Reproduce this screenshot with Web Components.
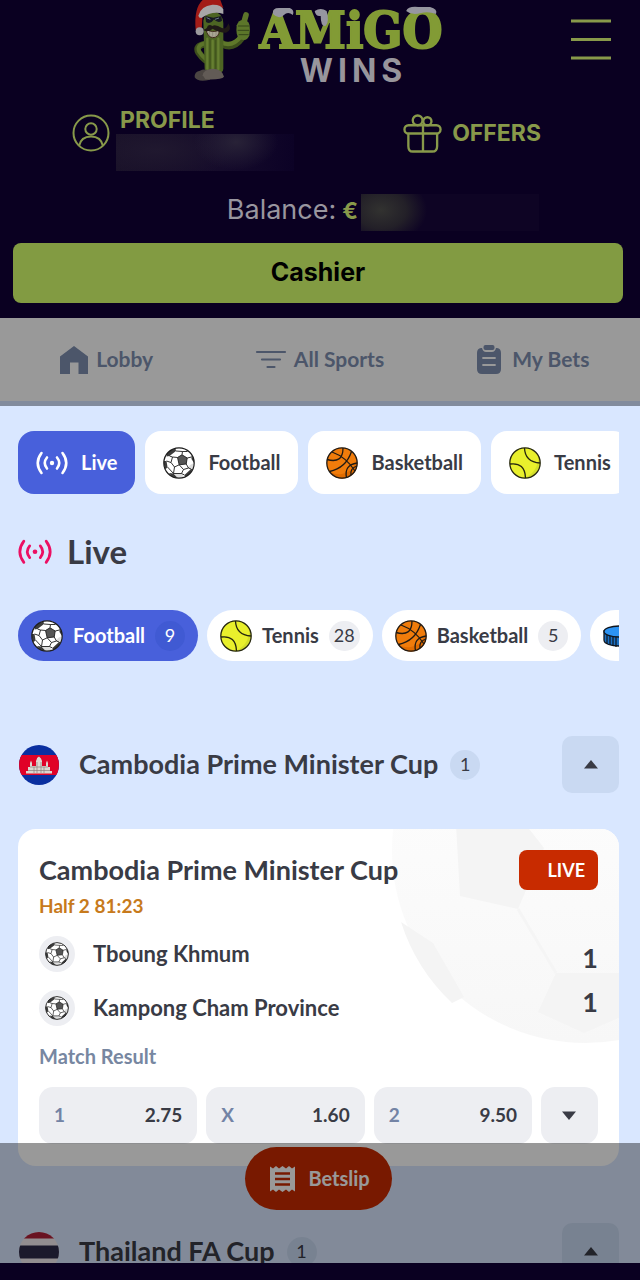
<!DOCTYPE html>
<html lang="en">
<head>
<meta charset="utf-8">
<meta name="viewport" content="width=device-width, initial-scale=1">
<title>Amigo Wins – Live</title>
<style>
  html, body { margin: 0; height: 100%; }
  body {
    font-family: Lato, "Open Sans", sans-serif;
    font-weight: 700;
    color: #393b45;
    background: #0a0021;
    --ink: #393b45;
    --blue: #4860db;
    --red: #c82b00;
    --page: #d9e7ff;
    --pebble: #edeef2;
    --lime: #88994a;
  }
</style>
</head>
<body>
<amigo-app></amigo-app>

<script>
const ICONS = {
  football: ['0 0 32 32', `
    <circle cx="16" cy="16" r="15.2" fill="#fff"/>
    <path d="M4 6.500 7 3.600 12.500 1.300 13 4 6.500 9 3.500 9.500z M.8 14 3.500 14 4.500 20 2.500 22.500 1 18z M6 26 10.500 26.500 15 31 9 29.500z M28.500 8 31 13 31 16 28.500 12z M28 22 30 21.500 27 26.500 22 30 21.500 28z" fill="#3c3c3c"/>
    <path d="M14.500 10.500 19 7.800 24.200 11 23.200 17 16.200 17.800z" fill="#555"/>
    <path d="M27 18 31 16 30 21.500 28 22 25 21z M11 26.500 19 27 21 31 15 31z" fill="#ddd"/>
    <g fill="none" stroke="#1c1c1c" stroke-width=".9" stroke-linejoin="round">
      <path d="M14.500 10.500 19 7.800 24.200 11 23.200 17 16.200 17.800z M14.500 10.500 9.500 10 6.500 9 M9.500 10 8 15.500 3.500 14 M8 15.500 11.500 20 16.200 17.800 M11.500 20 10.500 26.500 4.500 20 M10.500 26.500 18.500 26.500 20.500 22.500 16.200 17.800 M20.500 22.500 25.500 21 23.200 17 M18.500 26.500 21.500 28 M25.500 21 28 22 M24.200 11 28.500 10 M19 7.800 19.500 4.500 13 4 M19.500 4.500 24.500 4.500"/>
      <circle cx="16" cy="16" r="15.200" stroke-width="1.200"/>
    </g>`],
  basketball: ['0 0 32 32', `
    <circle cx="16" cy="16" r="15.2" fill="#f07c0b"/>
    <path d="M3 24A15.200 15.200 0 0 0 31 13Q27 25 16 27Q8 28 3 24z" fill="#e06c00"/>
    <g fill="none" stroke="#201a14" stroke-width="1.300">
      <path d="M6 5Q20 10 29 24 M1 12.500Q17 17 17 1 M3.500 24.500Q20 21 25.500 4.500 M31 16Q18 18 20.500 30.500 M31 19Q24 21 25 28"/>
      <circle cx="16" cy="16" r="15.200"/>
    </g>`],
  tennis: ['0 0 32 32', `
    <circle cx="16" cy="16" r="15.2" fill="#e9f02c"/>
    <path d="M29.500 11A15.200 15.200 0 0 1 15 31.200Q28 26 29.500 11z" fill="#d3de2a"/>
    <g fill="none" stroke="#25260f" stroke-width="1.300">
      <path d="M15.500 1Q16 15 31 16 M1 17Q16 15 16.500 31"/>
      <circle cx="16" cy="16" r="15.200"/>
    </g>`],
  puck: ['0 0 32 32', `
    <path d="M1 11V20C1 28 31 28 31 20V11z" fill="#1a70c4" stroke="#10151c" stroke-width="1.300"/>
    <path d="M4 14V24 M7 16V25 M10 17V26 M13 17V27 M17 17V27 M21 17V26" stroke="#10151c" stroke-width="1.200"/>
    <ellipse cx="16" cy="11.500" rx="15" ry="5.500" fill="#2c93f3" stroke="#10151c" stroke-width="1.300"/>`],
  live: ['0 0 32 24', `
    <circle cx="16" cy="12" r="2.200" fill="currentColor"/>
    <path d="M5.500 2Q-2 12 5.500 22 M11 6.500Q6.500 12 11 17.500 M21 6.500Q25.500 12 21 17.500 M26.500 2Q34 12 26.500 22" fill="none" stroke="currentColor" stroke-width="2.600" stroke-linecap="round"/>`],
  profile: ['0 0 38 38', `
    <g fill="none" stroke="currentColor" stroke-width="2"><circle cx="19" cy="19" r="17.500"/><circle cx="19" cy="15" r="5.700"/><path d="M7 32Q9 22.500 19 22.500T31 32"/></g>`],
  gift: ['0 0 40 40', `
    <g fill="none" stroke="currentColor" stroke-width="2.400"><rect x="1.500" y="11.500" width="37" height="8.500" rx="4.200"/><path d="M5.500 20V33Q5.500 38.500 10 38.500H30Q35 38.500 35 33V20 M20.500 11V38"/><circle cx="15" cy="6.500" r="5"/><circle cx="25" cy="7.500" r="4.200"/></g>`],
  menu: ['0 0 40 41', `<path d="M0 2H40 M0 20.500H40 M0 39H40" stroke="currentColor" stroke-width="3"/>`],
  home: ['0 0 28 28', `<path d="M14 0 28 10.500V28H18.500V16.500H10V28H0V10.500z" fill="currentColor"/>`],
  filter: ['0 0 30 20', `<path d="M1 2H29 M6 9.500H24 M11.500 17H18.500" stroke="currentColor" stroke-width="2.200" stroke-linecap="round"/>`],
  clipboard: ['0 0 24 30', `
    <path d="M4 3H5Q6 7 9 7H15Q18 7 19 3H20Q24 3.500 24 8V24Q24 29 19 29H5Q0 29 0 24V8Q0 3.500 4 3z" fill="currentColor"/><rect x="6.500" y="0" width="11" height="5" rx="2" fill="currentColor"/>
    <path d="M6 13H18 M6 20H18" stroke="#999" stroke-width="1.800" stroke-linecap="round"/>`],
  receipt: ['0 0 25 28', `
    <path d="M0 1.500 3 3.500 6 1 9 3.500 12.500 1 16 3.500 19 1 22 3.500 25 1.500V26.500L22 24.500 19 27 16 24.500 12.500 27 9 24.500 6 27 3 24.500 0 26.500z" fill="currentColor"/>
    <path d="M5 8.500H20 M5 14H20 M5 19.500H20" stroke="#c82b00" stroke-width="2.400"/>`],
  up: ['0 0 14 9', `<path d="M7 0 14 8.500H0z" fill="currentColor"/>`],
  down: ['0 0 14 9', `<path d="M0 .500H14L7 9z" fill="currentColor"/>`],
  cambodia: ['0 0 40 40', `
    <clipPath id="c"><circle cx="20" cy="20" r="20"/></clipPath>
    <g clip-path="url(#c)"><rect width="40" height="40" fill="#0a2fa0"/><rect y="10" width="40" height="20" fill="#e00127"/>
    <path d="M7 28.500V26H9V22H11V18L12 15.500 13 18V21H17V16L18 13.500V13L20 11.500 22 13.500 23 16V21H27V18L28 15.500 29 18V22H31V26H33V28.500z" fill="#dcd6d0"/>
    <path d="M9 25.500H31 M11 22H29 M15 22V28 M18 17V28 M22 17V28 M25 22V28" stroke="#8d7f7c" stroke-width=".7"/></g>`],
  thailand: ['0 0 40 40', `
    <clipPath id="t"><circle cx="20" cy="20" r="20"/></clipPath>
    <g clip-path="url(#t)"><rect width="40" height="40" fill="#f3ecf0"/><path d="M0 0H40V6.500H0z M0 33.500H40V40H0z" fill="#b01f38"/><rect y="13.500" width="40" height="13" fill="#2d2a4a"/></g>`],
  watermark: ['0 0 386 386', `
    <defs><linearGradient id="g" x1="0" x2="0" y1=".4" y2="1"><stop offset="0" stop-color="#fcfcfc"/><stop offset="1" stop-color="#f7f7f7"/></linearGradient></defs>
    <circle cx="193" cy="193" r="193" fill="url(#g)"/>
    <path d="M63 150 68 239 126 252 152 191 120 150z M9 265 41 286 72 340 60 346Q24 312 9 265z M164 316H280L240 355 192 376 146 355z" fill="#f4f4f4"/>
    <path d="M126 252 164 316" stroke="#f5f5f5" stroke-width="3"/>`],
  cactus: ['45 0 180 250', `
    <g stroke-linecap="round" fill="none">
      <path d="M84 132Q50 136 62 158 70 170 82 180" stroke="#3e501c" stroke-width="20"/>
      <path d="M84 130Q54 134 64 156 72 168 82 176" stroke="#5c742a" stroke-width="12"/>
      <path d="M130 130Q164 150 192 112" stroke="#3e501c" stroke-width="22"/>
      <path d="M130 127Q162 144 190 108" stroke="#5f782a" stroke-width="13"/>
      <path d="M204 45 198 66" stroke="#5c742a" stroke-width="17"/>
    </g>
    <path d="M76 62Q80 36 108 36 134 38 136 70V206Q136 222 108 220 82 222 80 206z" fill="#4d6423"/>
    <path d="M88 116V206 M104 122V212 M121 116V208" stroke="#667f31" stroke-width="7" stroke-linecap="round"/>
    <path d="M96 118V210 M113 120V210" stroke="#394a1a" stroke-width="2"/>
    <path d="M176 76Q184 54 206 62 220 68 214 106 208 126 186 118 172 110 176 76z" fill="#5c762a"/>
    <path d="M180 78H213 M179 91H214 M182 104H212" stroke="#34451a" stroke-width="3"/>
    <path d="M82 48 106 53 130 48 132 62Q120 72 108 58 98 74 84 66z" fill="#171923"/>
    <path d="M86 53 97 58 M111 58 123 54" stroke="#69758a" stroke-width="3"/>
    <path d="M84 88Q104 100 124 90 124 113 104 113 88 111 84 88z" fill="#aaa694" stroke="#40291b" stroke-width="3"/>
    <path d="M94 95V110 M104 96V112 M114 95V110" stroke="#625e50" stroke-width="1"/>
    <path d="M103 78Q112 72 132 84 145 90 151 70 164 90 144 98 122 98 104 86 88 100 73 88 86 90 89 78 95 72 103 78z" fill="#201917"/>
    <path d="M53 90Q47 24 74 0H127L136 24Q100 6 74 40L71 88z" fill="#a31c18"/>
    <path d="M61 47Q68 18 103 14 130 13 136 28V42Q104 31 70 54 62 54 61 47z" fill="#a8a6a8"/>
    <circle cx="65" cy="94" r="12" fill="#9b999d"/>
    <path d="M50 232Q49 214 66 212 82 204 96 216V239Q60 248 50 232z" fill="#4b4542"/>
    <path d="M74 226Q76 208 103 206 134 207 138 230 132 240 82 238z" fill="#625b56"/>`],
  snow: ['0 0 184 24', `
    <g fill="#9696a0"><path d="M14 11Q13 5 20 5H31Q36 7 34 12 29 8 25 12 20 17 14 11z M56 8Q62 4 68 8 71 19 67 23 62 24 62 13 57 14 56 8z M148 8Q150 3 160 4H172Q180 6 178 11 170 8 163 10 154 13 148 8z"/></g>`]
};

const define = (name, css, html) => {
  customElements.define(name, class extends HTMLElement {
    constructor() {
      super();
      const template = document.createElement('template');
      template.innerHTML = `<style>*{box-sizing:border-box}button{font:inherit;color:inherit;border:0;margin:0;padding:0;background:none;cursor:pointer}h1,h2,h3,p{margin:0;font-weight:inherit}.text{padding-bottom:2px}${css}</style>${typeof html === 'function' ? html(this) : html}`;
      this.attachShadow({ mode: 'open' }).append(template.content.cloneNode(true));
    }
  });
};

define('ui-icon', `:host{display:block;flex:none;line-height:0}svg{display:block;width:100%;height:auto;overflow:visible}`,
  el => { const [box, art] = ICONS[el.getAttribute('name')]; return `<svg viewBox="${box}" aria-hidden="true">${art}</svg>`; });

define('count-badge', `
  :host{display:flex;align-items:center;justify-content:center;flex:none;min-width:30px;height:30px;padding:0 5px 2px;box-sizing:border-box;border-radius:15px;background:var(--badge,#edeef2);font-size:18px;font-weight:400}
`, `<slot></slot>`);

define('brand-logo', `
  :host{display:flex;gap:6px;height:90px}
  ui-icon.cactus{width:60px}
  .word{position:relative;display:flex;flex-direction:column;align-items:center}
  .amigo{font:700 51px/60px "DejaVu Serif Condensed","DejaVu Serif",serif;font-stretch:condensed;color:#829b35;-webkit-text-stroke:2px #829b35;white-space:nowrap}
  .wins{font:700 32px/22px Inter,sans-serif;letter-spacing:5px;padding-left:5px;color:#98969c}
  ui-icon.snow{position:absolute;top:3px;left:0;right:0}
`, `<ui-icon class="cactus" name="cactus"></ui-icon>
  <div class="word"><span class="amigo">AMiGO</span><span class="wins">WINS</span><ui-icon class="snow" name="snow"></ui-icon></div>`);

define('site-header', `
  :host{display:block;padding:0 17px 15px 13px;background:#0a0021;color:var(--lime);font-family:Inter,sans-serif;font-weight:700;font-size:23px}
  .top{display:grid;grid-template-columns:1fr auto 1fr;margin-bottom:17px}
  .top brand-logo{grid-column:2}
  .menu{justify-self:end;align-self:start;width:40px;margin:19px 12px 0 0}
  .links{display:flex;justify-content:space-between;padding:0 82px 0 59px}
  a{display:flex;align-items:flex-start;color:inherit;text-decoration:none;line-height:27px}
  .profile{gap:6px}
  .profile ui-icon{width:38px;margin-top:7px}
  .profile span{padding-left:4px}
  .mask{display:block;width:178px;height:37px;background:radial-gradient(ellipse 42px 28px at 120px 8px,#282237,transparent),radial-gradient(ellipse 80px 30px at 40px 16px,#20182f,transparent),linear-gradient(90deg,#191128,#150b2b 60%,#0c0226)}
  .offers{align-items:center;gap:10px;height:52px}
  .offers ui-icon{width:39px}
  .balance{display:flex;align-items:center;height:37px;margin:23px 84px 12px 0;justify-content:flex-end;gap:6px}
  .balance .label{font-size:27px;font-weight:400;color:#99969f;padding-bottom:6px}
  .balance .sign{padding-bottom:3px}
  .balance .mask{background:radial-gradient(ellipse 46px 34px at 20px 16px,#323230,#232028 55%,transparent),#0e0424;margin-left:-3px}
  .cashier{display:block;width:100%;height:60px;border-radius:8px;background:#829b42;color:#000;font-size:25px;font-weight:700;padding-bottom:3px}
`, `<div class="top"><brand-logo></brand-logo><button class="menu" aria-label="Menu"><ui-icon name="menu"></ui-icon></button></div>
  <div class="links">
    <a class="profile" href="#profile"><ui-icon name="profile"></ui-icon><div><span>PROFILE</span><i class="mask"></i></div></a>
    <a class="offers" href="#offers"><ui-icon name="gift"></ui-icon><span>OFFERS</span></a>
  </div>
  <div class="balance"><span class="label">Balance:</span><span class="sign">€</span><i class="mask"></i></div>
  <button class="cashier">Cashier</button>`);

define('sports-nav', `
  :host{display:block;background:#999;border-bottom:5px solid #828b9c}
  nav{display:grid;grid-template-columns:repeat(3,1fr);height:83px}
  a{display:flex;align-items:center;justify-content:center;gap:8px;color:#4c566a;text-decoration:none;font-size:21px;white-space:nowrap}
  .home{width:28px}.filter{width:30px}.clip{width:24px;margin-right:3px}
`, `<nav><a href="#lobby"><ui-icon class="home" name="home"></ui-icon><span class="text">Lobby</span></a><a href="#sports"><ui-icon class="filter" name="filter"></ui-icon><span class="text">All Sports</span></a><a href="#bets"><ui-icon class="clip" name="clipboard"></ui-icon><span class="text">My Bets</span></a></nav>`);

define('sport-chip', `
  :host{display:block;flex:none}
  button{display:flex;align-items:center;gap:13px;height:63px;padding:0 18px;border-radius:16px;background:#fff;font-size:20px}
  :host([active]) button{background:var(--blue);color:#fff}
  ui-icon{width:32px}
`, el => `<button><ui-icon name="${el.getAttribute('icon')}"></ui-icon><span class="text"><slot></slot></span></button>`);

define('sport-pill', `
  :host{display:block;flex:none;--badge:#edeef2}
  :host([active]){--badge:#405ad3}
  button{display:flex;align-items:center;gap:10px;height:51px;padding:0 13px;border-radius:26px;background:#fff;font-size:20px}
  :host([active]) button{background:var(--blue);color:#fff}
  ui-icon{width:32px}
`, el => `<button aria-label="${el.getAttribute('icon')}"><ui-icon name="${el.getAttribute('icon')}"></ui-icon>${el.hasAttribute('count') ? `<span class="text"><slot></slot></span><count-badge>${el.getAttribute('count')}</count-badge>` : ''}</button>`);

define('scroll-row', `:host{display:flex;gap:var(--gap,10px);overflow:hidden}`, `<slot></slot>`);

define('league-group', `
  :host{display:block;--badge:#c9d9f2}
  header{display:flex;align-items:center;height:57px;padding-left:1px}
  .flag{width:40px;margin-right:20px}
  h2{font-size:27px;margin-right:12px;white-space:nowrap}
  button{display:flex;align-items:center;justify-content:center;width:57px;height:57px;margin-left:auto;border-radius:10px;background:#c9d9f2}
  button ui-icon{width:14px}
  .body{padding-top:36px}
`, el => `<header><ui-icon class="flag" name="${el.getAttribute('flag')}"></ui-icon><h2 class="text">${el.getAttribute('name')}</h2><count-badge>1</count-badge><button aria-label="Collapse"><ui-icon name="up"></ui-icon></button></header><div class="body"><slot></slot></div>`);

define('team-row', `
  :host{display:flex;align-items:center;gap:18px;height:36px;font-size:22px;white-space:nowrap}
  .crest{display:flex;align-items:center;justify-content:center;width:36px;height:36px;border-radius:50%;background:var(--pebble)}
  ui-icon{width:24px}
`, `<span class="crest"><ui-icon name="football"></ui-icon></span><span class="text"><slot></slot></span>`);

define('odds-button', `
  :host{display:block}
  button{display:flex;align-items:center;justify-content:space-between;width:100%;height:57px;padding:0 15px 2px;border-radius:14px;background:var(--pebble);font-size:19px}
  .pick{color:#7383a5}
`, el => `<button><span class="pick">${el.getAttribute('pick')}</span><slot></slot></button>`);

define('match-card', `
  :host{display:block;position:relative;overflow:hidden;padding:21px 21px 22px;border-radius:18px;background:#fff}
  .ball{position:absolute;width:386px;right:-159px;top:-172px}
  .content{position:relative}
  .head{display:flex;align-items:center;justify-content:space-between;height:40px}
  h3{font-size:27px;white-space:nowrap}
  .live{height:40px;padding:0 13px 0 28px;border-radius:8px;background:var(--red);color:#fff;font-size:18px;line-height:40px}
  .clock{font-size:19px;line-height:24px;margin-top:4px;color:#c77a1c}
  .teams{display:flex;justify-content:space-between;margin-top:18px}
  .names{display:grid;gap:18px}
  .score{display:grid;align-content:start;font-size:27px;line-height:44px}
  .market{font-size:20px;line-height:24px;margin:18px 0 19px;color:#7787a1}
  .odds{display:grid;grid-template-columns:1fr 1fr 1fr 57px;gap:9px}
  .more{display:flex;align-items:center;justify-content:center;border-radius:14px;background:var(--pebble)}
  .more ui-icon{width:14px}
`, `<ui-icon class="ball" name="watermark"></ui-icon>
  <div class="content">
    <div class="head"><h3 class="text">Cambodia Prime Minister Cup</h3><span class="live">LIVE</span></div>
    <p class="clock">Half 2 81:23</p>
    <div class="teams"><div class="names"><team-row>Tboung Khmum</team-row><team-row>Kampong Cham Province</team-row></div><div class="score"><span>1</span><span>1</span></div></div>
    <p class="market">Match Result</p>
    <div class="odds"><odds-button pick="1">2.75</odds-button><odds-button pick="X">1.60</odds-button><odds-button pick="2">9.50</odds-button><button class="more" aria-label="More markets"><ui-icon name="down"></ui-icon></button></div>
  </div>`);

define('betslip-button', `
  :host{display:block}
  button{display:flex;align-items:center;gap:13px;height:63px;padding:0 22px 0 25px;border-radius:32px;background:var(--red);color:#fff;font-size:20px}
  ui-icon{width:25px}
`, `<button><ui-icon name="receipt"></ui-icon><span class="text"><slot></slot></span></button>`);

define('amigo-app', `
  :host{display:grid;grid-template-rows:auto auto minmax(0,1fr);height:100vh;padding-bottom:17px;box-sizing:border-box;background:#0a0021}
  main{position:relative;overflow:hidden;padding:25px 21px 0 18px;background:var(--page)}
  h1{display:flex;align-items:center;gap:15px;height:40px;margin:38px 0;font-size:33px}
  h1 ui-icon{width:34px;color:#ec0f63}
  .pills{--gap:9px}
  .groups{display:grid;gap:57px;margin-top:75px}
  .dock{position:absolute;left:0;right:0;bottom:0;height:120px;display:flex;justify-content:center;align-items:flex-start;padding:4px 3px 0 0}
  .dock::after{content:"";position:absolute;inset:0;background:rgba(0,0,0,.4);pointer-events:none}
`, `<site-header></site-header><sports-nav></sports-nav>
  <main>
    <scroll-row><sport-chip icon="live" active>Live</sport-chip><sport-chip icon="football">Football</sport-chip><sport-chip icon="basketball">Basketball</sport-chip><sport-chip icon="tennis">Tennis</sport-chip></scroll-row>
    <h1><ui-icon name="live"></ui-icon><span class="text">Live</span></h1>
    <scroll-row class="pills"><sport-pill icon="football" count="9" active>Football</sport-pill><sport-pill icon="tennis" count="28">Tennis</sport-pill><sport-pill icon="basketball" count="5">Basketball</sport-pill><sport-pill icon="puck"></sport-pill></scroll-row>
    <div class="groups">
      <league-group flag="cambodia" name="Cambodia Prime Minister Cup"><match-card></match-card></league-group>
      <league-group flag="thailand" name="Thailand FA Cup"></league-group>
    </div>
    <div class="dock"><betslip-button>Betslip</betslip-button></div>
  </main>`);
</script>
</body>
</html>
